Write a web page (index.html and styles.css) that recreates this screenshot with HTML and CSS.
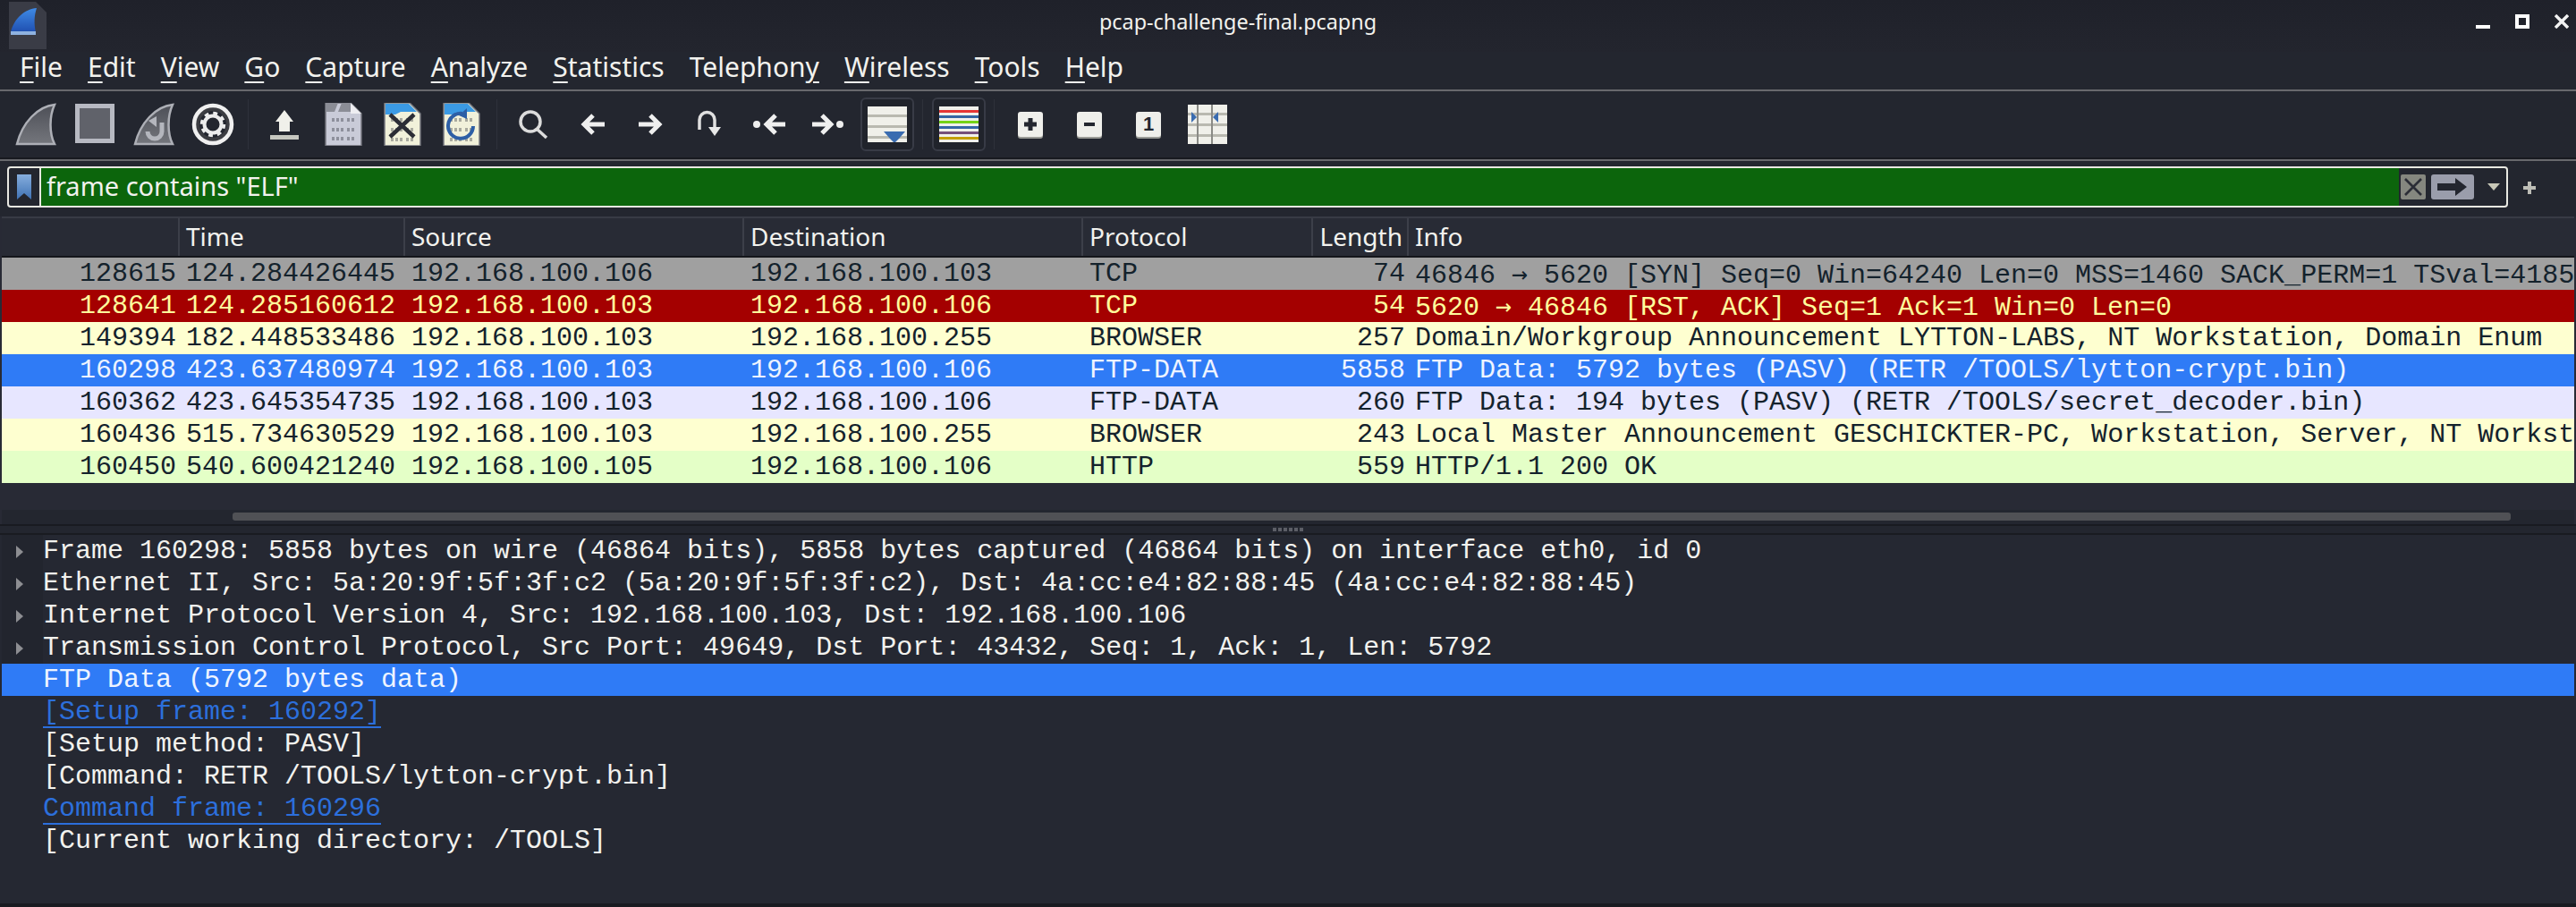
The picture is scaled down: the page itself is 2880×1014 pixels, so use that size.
FILE: index.html
```html
<!DOCTYPE html>
<html lang="en">
<head>
    <meta charset="UTF-8">
    <title>pcap-challenge-final.pcapng</title>
    <link rel="stylesheet" href="styles.css">
</head>
<body>
<div class="app">

    <div class="titlebar">
        <svg class="logo" width="44" height="56" viewBox="0 0 44 56">
            <defs>
                <linearGradient id="fin" x1="0" y1="0" x2="0" y2="1">
                    <stop offset="0" stop-color="#3f8be6"/>
                    <stop offset="1" stop-color="#1f4fb0"/>
                </linearGradient>
            </defs>
            <path d="M0 2H30L42 14V55H0Z" fill="#3a3c46"/>
            <path d="M31 9C18 10 6 20 2 36H30C28 27 28 18 31 9Z" fill="url(#fin)"/>
            <rect x="2" y="35" width="28" height="4" fill="#8fb2e0"/>
        </svg>
        <div class="wintitle">pcap-challenge-final.pcapng</div>
        <div class="winbtns">
            <svg width="16" height="16" viewBox="0 0 16 16"><rect y="12" width="16" height="4" fill="#fff"/></svg>
            <svg width="16" height="16" viewBox="0 0 16 16"><rect x="2" y="2" width="12" height="12" fill="none" stroke="#fff" stroke-width="4"/></svg>
            <svg width="16" height="16" viewBox="0 0 16 16"><path d="M1 1L15 15M15 1L1 15" stroke="#f2f2f2" stroke-width="3.4"/></svg>
        </div>
    </div>

    <div class="menubar">
        <span><u>F</u>ile</span>
        <span><u>E</u>dit</span>
        <span><u>V</u>iew</span>
        <span><u>G</u>o</span>
        <span><u>C</u>apture</span>
        <span><u>A</u>nalyze</span>
        <span><u>S</u>tatistics</span>
        <span>Telephon<u>y</u></span>
        <span><u>W</u>ireless</span>
        <span><u>T</u>ools</span>
        <span><u>H</u>elp</span>
    </div>

    <div class="toolbar">
        <div class="slot">
            <svg width="48" height="48" viewBox="0 0 48 48">
                <defs>
                    <linearGradient id="gfin" x1="0" y1="0" x2="0" y2="1">
                        <stop offset="0" stop-color="#4d4f57"/>
                        <stop offset="1" stop-color="#74767c"/>
                    </linearGradient>
                </defs>
                <path d="M45 2C26 4 9 22 3 46H45C39 34 39 15 45 2Z" fill="url(#gfin)" stroke="#adafb6" stroke-width="2.5"/>
            </svg>
        </div>
        <div class="slot">
            <svg width="48" height="48" viewBox="0 0 48 48"><rect x="4.5" y="3.5" width="39" height="39" fill="#60626a" stroke="#b7b9c2" stroke-width="5"/></svg>
        </div>
        <div class="slot">
            <svg width="48" height="48" viewBox="0 0 48 48">
                <path d="M45 2C26 4 9 22 3 46H45C39 34 39 15 45 2Z" fill="url(#gfin)" stroke="#adafb6" stroke-width="2.5"/>
                <path d="M33 22V32A8 8 0 1 1 17 32" fill="none" stroke="#b4b6bd" stroke-width="5"/>
                <path d="M18 20L27 15V27Z" fill="#b4b6bd"/>
            </svg>
        </div>
        <div class="slot">
            <svg width="48" height="48" viewBox="0 0 48 48">
                <circle cx="24" cy="24" r="21" fill="#3c3d42" stroke="#f0f0f0" stroke-width="4.5"/>
                <circle cx="24" cy="24" r="15" fill="#23262f"/>
                <circle cx="24" cy="24" r="9.5" fill="none" stroke="#ececec" stroke-width="4"/>
                <circle cx="24" cy="24" r="12.5" fill="none" stroke="#ececec" stroke-width="3.5" stroke-dasharray="4.8 5"/>
            </svg>
        </div>
        <div class="tbsep"></div>
        <div class="slot">
            <svg width="48" height="48" viewBox="0 0 48 48">
                <path d="M24 8L34 21H30V32H18V21H14Z" fill="#f0f0ea"/>
                <rect x="8" y="36" width="32" height="5" fill="#c6c7c0"/>
            </svg>
        </div>
        <div class="slot">
            <svg width="48" height="48" viewBox="0 0 48 48">
                <path d="M4 0H32L44 12V48H4Z" fill="#c9cbd8" stroke="#74767e" stroke-width="1.5"/>
                <path d="M4 0H18L14 10H4Z" fill="#8b8d96"/>
                <path d="M22 0H32V10H18Z" fill="#8b8d96"/>
                <path d="M32 0L44 12H32Z" fill="#eeeef2"/>
                <path d="M11 19H38M11 30H38M11 40H38" stroke="#8e909c" stroke-width="4" stroke-dasharray="3 2 3 2 3 4"/>
            </svg>
        </div>
        <div class="slot">
            <svg width="48" height="48" viewBox="0 0 48 48">
                <path d="M4 0H32L44 12V48H4Z" fill="#f1f1da" stroke="#74767e" stroke-width="1.5"/>
                <path d="M5 1H31L40 10H22L16 13H5Z" fill="#3b9ae4"/>
                <path d="M11 19H38M11 30H38M11 41H38" stroke="#a8a99e" stroke-width="4" stroke-dasharray="3 2 3 2 3 4"/>
                <path d="M10 13L37 38M37 13L10 38" stroke="#2b2d35" stroke-width="4.5"/>
            </svg>
        </div>
        <div class="slot">
            <svg width="48" height="48" viewBox="0 0 48 48">
                <path d="M4 0H32L44 12V48H4Z" fill="#f1f1da" stroke="#74767e" stroke-width="1.5"/>
                <path d="M5 1H31L40 10H22L16 13H5Z" fill="#3b9ae4"/>
                <path d="M11 19H38M11 30H38M11 41H38" stroke="#a8a99e" stroke-width="4" stroke-dasharray="3 2 3 2 3 4"/>
                <path d="M25 12A14 14 0 1 0 37 26" fill="none" stroke="#2d5fa6" stroke-width="4"/>
                <path d="M21 14L30 6V18Z" fill="#2d5fa6"/>
            </svg>
        </div>
        <div class="tbsep"></div>
        <div class="slot">
            <svg width="48" height="48" viewBox="0 0 48 48">
                <circle cx="21" cy="21" r="11" fill="none" stroke="#dcdcdc" stroke-width="3.5"/>
                <path d="M28 29L39 39" stroke="#dcdcdc" stroke-width="3.5"/>
            </svg>
        </div>
        <div class="slot">
            <svg width="48" height="48" viewBox="0 0 48 48"><path d="M38 24H15M25 14L15 24L25 34" class="nav"/></svg>
        </div>
        <div class="slot">
            <svg width="48" height="48" viewBox="0 0 48 48"><path d="M10 24H33M23 14L33 24L23 34" class="nav"/></svg>
        </div>
        <div class="slot">
            <svg width="48" height="48" viewBox="0 0 48 48">
                <path d="M12 30V19A8.5 8.5 0 0 1 29 19V28" fill="none" stroke="#e0e0e0" stroke-width="3.5"/>
                <path d="M22 27H36L29 37Z" fill="#e8e8e8"/>
            </svg>
        </div>
        <div class="slot">
            <svg width="48" height="48" viewBox="0 0 48 48">
                <circle cx="10" cy="24" r="4" fill="#eee"/>
                <path d="M42 24H21M31 14L21 24L31 34" class="nav"/>
            </svg>
        </div>
        <div class="slot">
            <svg width="48" height="48" viewBox="0 0 48 48">
                <path d="M6 24H27M17 14L27 24L17 34" class="nav"/>
                <circle cx="37" cy="24" r="4" fill="#eee"/>
            </svg>
        </div>
        <div class="slot">
            <div class="toggle">
                <div class="sheet stripes">
                    <svg class="autoarrow" width="24" height="14" viewBox="0 0 24 14"><path d="M0 1H24L17 9L12 14L7 9Z" fill="#3a6cb0"/></svg>
                </div>
            </div>
        </div>
        <div class="tbsep"></div>
        <div class="slot">
            <div class="toggle">
                <div class="sheet colors">
                    <i class="c1"></i><i class="c2"></i><i class="c3"></i><i class="c4"></i><i class="c5"></i><i class="c6"></i>
                </div>
            </div>
        </div>
        <div class="tbsep"></div>
        <div class="slot">
            <div class="zoombtn"><svg width="16" height="16" viewBox="0 0 16 16"><path d="M8 1V15M1 8H15" stroke="#23262f" stroke-width="5"/></svg></div>
        </div>
        <div class="slot">
            <div class="zoombtn"><svg width="16" height="16" viewBox="0 0 16 16"><path d="M2 8H14" stroke="#23262f" stroke-width="4"/></svg></div>
        </div>
        <div class="slot">
            <div class="zoombtn one">1</div>
        </div>
        <div class="slot">
            <div class="resize stripes">
                <svg width="44" height="44" viewBox="0 0 44 44">
                    <path d="M11 0V44M27 0V44" stroke="#8a8b86" stroke-width="2"/>
                    <path d="M4 8L10 14L4 20Z" fill="#3a6cb0"/>
                    <path d="M34 8L28 14L34 20Z" fill="#3a6cb0"/>
                </svg>
            </div>
        </div>
    </div>

    <div class="filterbar">
        <div class="filterbox">
            <div class="bookmark">
                <svg width="16" height="28" viewBox="0 0 16 28">
                    <defs>
                        <linearGradient id="bm" x1="0" y1="0" x2="0" y2="1">
                            <stop offset="0" stop-color="#86aede"/>
                            <stop offset="1" stop-color="#3f72b4"/>
                        </linearGradient>
                    </defs>
                    <path d="M0 0H16V28L8 21L0 28Z" fill="url(#bm)"/>
                </svg>
            </div>
            <div class="filtertext">frame contains "ELF"</div>
            <div class="clearbtn"><svg width="20" height="20" viewBox="0 0 20 20"><path d="M1 1L19 19M19 1L1 19" stroke="#2b2d36" stroke-width="2.6"/></svg></div>
            <div class="applybtn"><svg width="34" height="20" viewBox="0 0 34 20"><path d="M0 6H20V0L33 10L20 20V14H0Z" fill="#23262f"/></svg></div>
            <div class="dropbtn"><svg width="14" height="8" viewBox="0 0 14 8"><path d="M0 0H14L7 8Z" fill="#c8c8b8"/></svg></div>
        </div>
        <div class="plusbtn"><svg width="14" height="14" viewBox="0 0 14 14"><path d="M7 0V14M0 7H14" stroke="#bdbdb6" stroke-width="4"/></svg></div>
    </div>

    <div class="listpane">
        <div class="cols head">
            <div></div>
            <div>Time</div>
            <div>Source</div>
            <div>Destination</div>
            <div>Protocol</div>
            <div class="lenhead">Length</div>
            <div>Info</div>
        </div>
        <div class="cols row syn">
            <div class="num">128615</div><div>124.284426445</div><div>192.168.100.106</div><div>192.168.100.103</div><div>TCP</div><div class="num">74</div><div>46846 <span class="arr">→</span> 5620 [SYN] Seq=0 Win=64240 Len=0 MSS=1460 SACK_PERM=1 TSval=4185</div>
        </div>
        <div class="cols row rst">
            <div class="num">128641</div><div>124.285160612</div><div>192.168.100.103</div><div>192.168.100.106</div><div>TCP</div><div class="num">54</div><div>5620 <span class="arr">→</span> 46846 [RST, ACK] Seq=1 Ack=1 Win=0 Len=0</div>
        </div>
        <div class="cols row smb">
            <div class="num">149394</div><div>182.448533486</div><div>192.168.100.103</div><div>192.168.100.255</div><div>BROWSER</div><div class="num">257</div><div>Domain/Workgroup Announcement LYTTON-LABS, NT Workstation, Domain Enum</div>
        </div>
        <div class="cols row sel">
            <div class="num">160298</div><div>423.637480974</div><div>192.168.100.103</div><div>192.168.100.106</div><div>FTP-DATA</div><div class="num">5858</div><div>FTP Data: 5792 bytes (PASV) (RETR /TOOLS/lytton-crypt.bin)</div>
        </div>
        <div class="cols row tcp">
            <div class="num">160362</div><div>423.645354735</div><div>192.168.100.103</div><div>192.168.100.106</div><div>FTP-DATA</div><div class="num">260</div><div>FTP Data: 194 bytes (PASV) (RETR /TOOLS/secret_decoder.bin)</div>
        </div>
        <div class="cols row smb">
            <div class="num">160436</div><div>515.734630529</div><div>192.168.100.103</div><div>192.168.100.255</div><div>BROWSER</div><div class="num">243</div><div>Local Master Announcement GESCHICKTER-PC, Workstation, Server, NT Workst</div>
        </div>
        <div class="cols row http">
            <div class="num">160450</div><div>540.600421240</div><div>192.168.100.105</div><div>192.168.100.106</div><div>HTTP</div><div class="num">559</div><div>HTTP/1.1 200 OK</div>
        </div>
        <div class="listempty"></div>
        <div class="hscroll"><div class="thumb"></div></div>
    </div>

    <div class="splitter"><div class="grip"></div></div>

    <div class="details">
        <div class="dline"><span class="exp"></span>Frame 160298: 5858 bytes on wire (46864 bits), 5858 bytes captured (46864 bits) on interface eth0, id 0</div>
        <div class="dline"><span class="exp"></span>Ethernet II, Src: 5a:20:9f:5f:3f:c2 (5a:20:9f:5f:3f:c2), Dst: 4a:cc:e4:82:88:45 (4a:cc:e4:82:88:45)</div>
        <div class="dline"><span class="exp"></span>Internet Protocol Version 4, Src: 192.168.100.103, Dst: 192.168.100.106</div>
        <div class="dline"><span class="exp"></span>Transmission Control Protocol, Src Port: 49649, Dst Port: 43432, Seq: 1, Ack: 1, Len: 5792</div>
        <div class="dline picked"><span class="noexp"></span>FTP Data (5792 bytes data)</div>
        <div class="dline"><span class="noexp"></span><span class="dlink">[Setup frame: 160292]</span></div>
        <div class="dline"><span class="noexp"></span>[Setup method: PASV]</div>
        <div class="dline"><span class="noexp"></span>[Command: RETR /TOOLS/lytton-crypt.bin]</div>
        <div class="dline"><span class="noexp"></span><span class="dlink">Command frame: 160296</span></div>
        <div class="dline"><span class="noexp"></span>[Current working directory: /TOOLS]</div>
    </div>

</div>
</body>
</html>
```

FILE: styles.css
```css
html, body {
    margin: 0;
    padding: 0;
    background: #23262f;
}
.app {
    width: 2880px;
    height: 1014px;
    overflow: hidden;
    display: flex;
    flex-direction: column;
    background: #23262f;
    color: #f2f2ee;
    font-family: "Noto Sans", sans-serif;
}
.app > div {
    flex: none;
}

/* title bar */
.titlebar {
    height: 58px;
    display: flex;
    align-items: flex-start;
    background: linear-gradient(#1f212a, #23252e);
}
.logo {
    margin: 0 0 0 10px;
    flex: none;
}
.wintitle {
    flex: 1;
    text-align: center;
    font-size: 23.4px;
    line-height: 30px;
    padding: 9px 0 0 0;
    margin-right: 54px;
}
.winbtns {
    display: flex;
    gap: 28px;
    padding: 16px 8px 0 0;
}

/* menu */
.menubar {
    height: 42px;
    display: flex;
    gap: 28px;
    padding-left: 22px;
    font-size: 30px;
    line-height: 34px;
    border-bottom: 2px solid #68696d;
}
.menubar u {
    text-decoration-thickness: 2px;
    text-underline-offset: 5px;
}

/* toolbar */
.toolbar {
    height: 74px;
    display: flex;
    padding-left: 7px;
    border-bottom: 2px solid #181a20;
}
.slot {
    width: 66px;
    display: flex;
    align-items: center;
    justify-content: center;
    flex: none;
}
.tbsep {
    width: 14px;
    flex: none;
}
.tbsep::after {
    content: "";
    display: block;
    width: 1px;
    height: 56px;
    margin: 9px 0 0 6px;
    background: #2e313b;
}
.nav {
    fill: none;
    stroke: #efefef;
    stroke-width: 5;
}
.toggle {
    width: 56px;
    height: 56px;
    border: 2px solid #383b46;
    border-radius: 6px;
    background: #20232b;
    display: flex;
    align-items: center;
    justify-content: center;
}
.sheet {
    width: 44px;
    height: 40px;
    position: relative;
    overflow: hidden;
    background-color: #f0f0ea;
}
.stripes {
    background-color: #f0f0ea;
    background-image: repeating-linear-gradient(#f0f0ea 0, #f0f0ea 9px, #b9b9b0 9px, #b9b9b0 12px);
}
.autoarrow {
    position: absolute;
    right: 2px;
    bottom: -1px;
}
.colors {
    display: flex;
    flex-direction: column;
    gap: 3px;
    padding-top: 4px;
    height: 36px;
}
.colors i {
    display: block;
    height: 3px;
    flex: none;
}
.c1 { background: #e53535; }
.c2 { background: #3465a4; }
.c3 { background: #73d216; }
.c4 { background: #3465a4; }
.c5 { background: #75507b; }
.c6 { background: #c4a000; }
.zoombtn {
    width: 28px;
    height: 28px;
    border-radius: 3px;
    background: #efefeb;
    box-shadow: 0 2px 0 #9a9b96;
    display: flex;
    align-items: center;
    justify-content: center;
}
.zoombtn.one {
    color: #23262f;
    font-family: "Liberation Sans", sans-serif;
    font-weight: bold;
    font-size: 22px;
}
.resize {
    width: 44px;
    height: 44px;
}
.resize svg {
    display: block;
}

/* display filter */
.filterbar {
    height: 64px;
    display: flex;
    align-items: flex-start;
    border-top: 2px solid #68696d;
    box-sizing: border-box;
}
.filterbox {
    width: 2796px;
    height: 46px;
    margin: 6px 0 0 8px;
    box-sizing: border-box;
    display: flex;
    align-items: center;
    border: 2px solid #e8e8e2;
    border-radius: 4px;
}
.bookmark {
    width: 34px;
    height: 42px;
    flex: none;
    display: flex;
    align-items: center;
    justify-content: center;
    border-right: 2px solid #e8e8e2;
}
.filtertext {
    width: 2636px;
    height: 42px;
    flex: none;
    background: #0c650c;
    font-size: 29px;
    line-height: 40px;
    padding-left: 6px;
    box-sizing: border-box;
}
.clearbtn {
    width: 28px;
    height: 28px;
    margin-left: 2px;
    border-radius: 2px;
    background: #85877f;
    display: flex;
    align-items: center;
    justify-content: center;
    flex: none;
}
.applybtn {
    width: 48px;
    height: 28px;
    margin-left: 6px;
    border-radius: 3px;
    background: #9a9dab;
    display: flex;
    align-items: center;
    justify-content: center;
    flex: none;
}
.dropbtn {
    margin-left: 15px;
    display: flex;
    flex: none;
}
.plusbtn {
    margin: 20px 0 0 17px;
    height: 14px;
}

/* packet list */
.listpane {
    height: 344px;
    padding: 0 2px;
    background: #282a35;
    display: flex;
    flex-direction: column;
}
.cols {
    display: grid;
    grid-template-columns: 199px 252px 379px 379px 257px 107px 1fr;
    flex: none;
}
.head {
    height: 46px;
    box-sizing: border-box;
    font-size: 28px;
    line-height: 40px;
    background: #282b35;
    border-top: 2px solid #383b45;
    border-bottom: 2px solid #14161b;
}
.head > div {
    padding-left: 7px;
    border-right: 2px solid #3c3f49;
    overflow: hidden;
}
.head > div:last-child {
    border-right: none;
}
.lenhead {
    text-align: right;
    padding-right: 5px;
}
.row {
    height: 36px;
    font-family: "Liberation Mono", monospace;
    font-size: 30px;
    line-height: 36px;
    white-space: pre;
    color: #14222c;
}
.row > div {
    padding-left: 7px;
    overflow: hidden;
}
.row > .num {
    text-align: right;
    padding: 0 4px 0 0;
}
.arr {
    font-family: "DejaVu Sans Mono", monospace;
    font-size: 29.8px;
}
.syn { background: #a0a0a0; }
.rst { background: #a40000; color: #fffc9c; }
.smb { background: #feffd0; }
.sel { background: #2f7bf6; color: #eef4ff; }
.tcp { background: #e7e6ff; }
.http { background: #e4ffc7; }
.listempty {
    flex: 1;
}
.hscroll {
    height: 16px;
    flex: none;
    background: #23262f;
    padding: 3px 0 0 258px;
    box-sizing: border-box;
}
.thumb {
    width: 2547px;
    height: 9px;
    border-radius: 3px;
    background: #505155;
}

/* splitter */
.splitter {
    height: 12px;
    box-sizing: border-box;
    background: #23262f;
    border-top: 2px solid #191b21;
    border-bottom: 2px solid #191b21;
    display: flex;
    justify-content: center;
}
.grip {
    width: 34px;
    height: 4px;
    margin-top: 2px;
    background: repeating-linear-gradient(90deg, #5c5e66 0, #5c5e66 4px, transparent 4px, transparent 6px);
}

/* packet details */
.app > .details {
    flex: 1;
    min-height: 0;
    padding: 0 2px;
    background: #252832;
    border-bottom: 4px solid #191b21;
    font-family: "Liberation Mono", monospace;
    font-size: 30px;
    line-height: 36px;
}
.dline {
    height: 36px;
    display: flex;
    white-space: pre;
}
.exp, .noexp {
    width: 46px;
    flex: none;
    position: relative;
}
.exp {
    background: #22252e;
}
.exp::after {
    content: "";
    position: absolute;
    left: 16px;
    top: 12px;
    border-left: 8px solid #8d8e92;
    border-top: 7px solid transparent;
    border-bottom: 7px solid transparent;
}
.picked {
    background: #2f7bf6;
    color: #eef4ff;
}
.dlink {
    color: #2c6fdc;
    height: 36px;
    box-sizing: border-box;
    border-bottom: 2px solid #2c6fdc;
}
```
